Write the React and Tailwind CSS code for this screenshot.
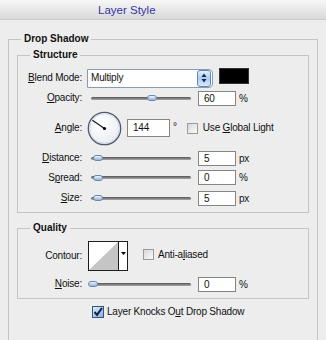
import React from "react";

const Label = ({ children }) => (
  <div className="w-[64px] shrink-0 text-right leading-[12px]">{children}</div>
);

function Slider({ pos }) {
  return (
    <div className="relative ml-[9px] flex h-[8px] w-[100px] shrink-0 items-center">
      <div className="h-[3px] w-full rounded-full bg-gradient-to-b from-[#555555] to-[#a9a9a9]" />
      <div
        className="absolute top-[1px] h-[6px] w-[10px] rounded-full border border-[#6a89b0] bg-gradient-to-b from-[#eef4fb] to-[#94b3d8]"
        style={{ left: pos }}
      />
    </div>
  );
}

function Field({ children }) {
  return (
    <div className="ml-[7px] h-[15px] w-[38px] shrink-0 border border-[#858585] bg-white pl-[5px] leading-[13px]">
      {children}
    </div>
  );
}

function Box() {
  return (
    <div className="h-[11px] w-[11px] shrink-0 border border-[#9a9a9a] bg-gradient-to-br from-[#d8d8d8] to-[#fbfbfb]" />
  );
}

function SliderRow({ label, pos, value, unit, h }) {
  return (
    <div className={`flex items-center ${h}`}>
      <Label>{label}</Label>
      <Slider pos={pos} />
      <Field>{value}</Field>
      <span className="ml-[3px]">{unit}</span>
    </div>
  );
}

export default function App() {
  return (
    <div className="h-[340px] w-[326px] overflow-hidden bg-[#ededed] font-['Liberation_Sans',Arial,sans-serif] text-[10px] tracking-[-0.2px] text-[#111]">
      <div className="flex h-[20px] items-center border-b border-[#cdcdcd] bg-gradient-to-b from-[#f7f7f7] to-[#d9d9d9] pl-[98px]">
        <span className="text-[11.5px] leading-[14px] tracking-normal text-[#3535a6]">Layer Style</span>
      </div>

      <fieldset className="mx-[8px] mt-[13px] border border-[#c4c4c4] px-[8px] pb-[60px]">
        <legend className="ml-[4px] px-[3px] font-bold leading-[12px] tracking-normal">Drop Shadow</legend>

        <fieldset className="mt-[4px] border border-[#c4c4c4]">
          <legend className="ml-[12px] px-[3px] font-bold leading-[12px] tracking-normal">Structure</legend>
          <div className="pb-[3px] pt-[7px]">
            <div className="flex h-[20px] items-center">
              <Label>
                <u className="underline-offset-[1px]">B</u>lend Mode:
              </Label>
              <div className="ml-[5px] flex h-[19px] w-[126px] shrink-0 items-center rounded-r-[4px] border border-[#8a9bb0] bg-white pl-[3px] pr-[1px]">
                <span className="flex-1 leading-[12px]">Multiply</span>
                <div className="flex h-[17px] w-[14px] items-center justify-center rounded-[3px] border border-[#5f86bd] bg-gradient-to-b from-[#e4f0fc] via-[#a9cbf2] to-[#dbeafb]">
                  <svg width="6" height="10" viewBox="0 0 6 10">
                    <path d="M3 0.5 L5.5 4 H0.5Z M3 9.5 L5.5 6 H0.5Z" fill="#1a2a44" />
                  </svg>
                </div>
              </div>
              <div className="ml-[6px] h-[16px] w-[30px] shrink-0 self-start border border-[#333] bg-black" />
            </div>

            <SliderRow
              label={<><u>O</u>pacity:</>}
              pos={56}
              value="60"
              unit="%"
              h="h-[20px]"
            />

            <div className="flex h-[40px] items-center">
              <Label>
                <u>A</u>ngle:
              </Label>
              <svg className="ml-[5px] shrink-0" width="35" height="35" viewBox="0 0 35 35">
                <defs>
                  <radialGradient id="dialg" cx="0.4" cy="0.35" r="0.7">
                    <stop offset="0" stopColor="#ffffff" />
                    <stop offset="1" stopColor="#e9ecf0" />
                  </radialGradient>
                </defs>
                <circle cx="17.5" cy="17.5" r="16.2" fill="url(#dialg)" stroke="#4d5b6e" strokeWidth="1.3" />
                <circle cx="17.5" cy="17.5" r="14.8" fill="none" stroke="#c9d1dc" strokeWidth="0.8" />
                <line x1="17.5" y1="17.5" x2="5.4" y2="9.2" stroke="#111" strokeWidth="1.1" />
                <circle cx="17.5" cy="17.5" r="1.6" fill="#000" />
              </svg>
              <div className="ml-[5px] h-[18px] w-[43px] shrink-0 border border-[#858585] bg-white pl-[5px] leading-[16px]">
                144
              </div>
              <span className="ml-[3px] self-start pt-[14px] leading-[10px]">°</span>
              <div className="ml-[10px] flex items-center">
                <Box />
                <span className="ml-[5px] leading-[12px]">
                  Use <u>G</u>lobal Light
                </span>
              </div>
            </div>

            <SliderRow label={<><u>D</u>istance:</>} pos={2} value="5" unit="px" h="h-[20px]" />
            <SliderRow label={<>S<u>p</u>read:</>} pos={2} value="0" unit="%" h="h-[19px]" />
            <SliderRow label={<><u>S</u>ize:</>} pos={2} value="5" unit="px" h="h-[22px]" />
          </div>
        </fieldset>

        <fieldset className="mt-[9px] border border-[#c4c4c4]">
          <legend className="ml-[12px] px-[3px] font-bold leading-[12px] tracking-normal">Quality</legend>
          <div className="pb-[4px] pt-[7px]">
            <div className="flex h-[30px] items-center">
              <Label>Contour:</Label>
              <div className="ml-[6px] flex h-[30px] w-[40px] shrink-0 border border-[#1e1e1e] bg-white">
                <svg className="block" width="29" height="28" viewBox="0 0 29 28">
                  <polygon points="0,28 29,0 29,28" fill="#c5c5c5" />
                </svg>
                <div className="flex flex-1 items-center justify-center border-l border-[#1e1e1e] pb-[5px]">
                  <svg width="5" height="3" viewBox="0 0 5 3">
                    <path d="M0 0H5L2.5 3Z" fill="#000" />
                  </svg>
                </div>
              </div>
              <div className="-mt-[3px] ml-[15px] flex items-center">
                <Box />
                <span className="ml-[4px] leading-[12px]">
                  Anti-a<u>l</u>iased
                </span>
              </div>
            </div>
            <div className="mt-[3px]">
              <SliderRow label={<><u>N</u>oise:</>} pos={-3} value="0" unit="%" h="h-[20px]" />
            </div>
          </div>
        </fieldset>

        <div className="mt-[6px] flex h-[13px] items-center pl-[75px]">
          <div className="flex h-[12px] w-[12px] shrink-0 items-center justify-center border border-[#34577f] bg-gradient-to-br from-[#dcebfb] to-[#86b0dd]">
            <svg width="10" height="10" viewBox="0 0 10 10">
              <path d="M1.5 5 L4 7.8 L9 1" stroke="#0f2440" strokeWidth="2" fill="none" />
            </svg>
          </div>
          <span className="ml-[3px] leading-[12px]">
            Layer Knocks O<u>u</u>t Drop Shadow
          </span>
        </div>
      </fieldset>
    </div>
  );
}
